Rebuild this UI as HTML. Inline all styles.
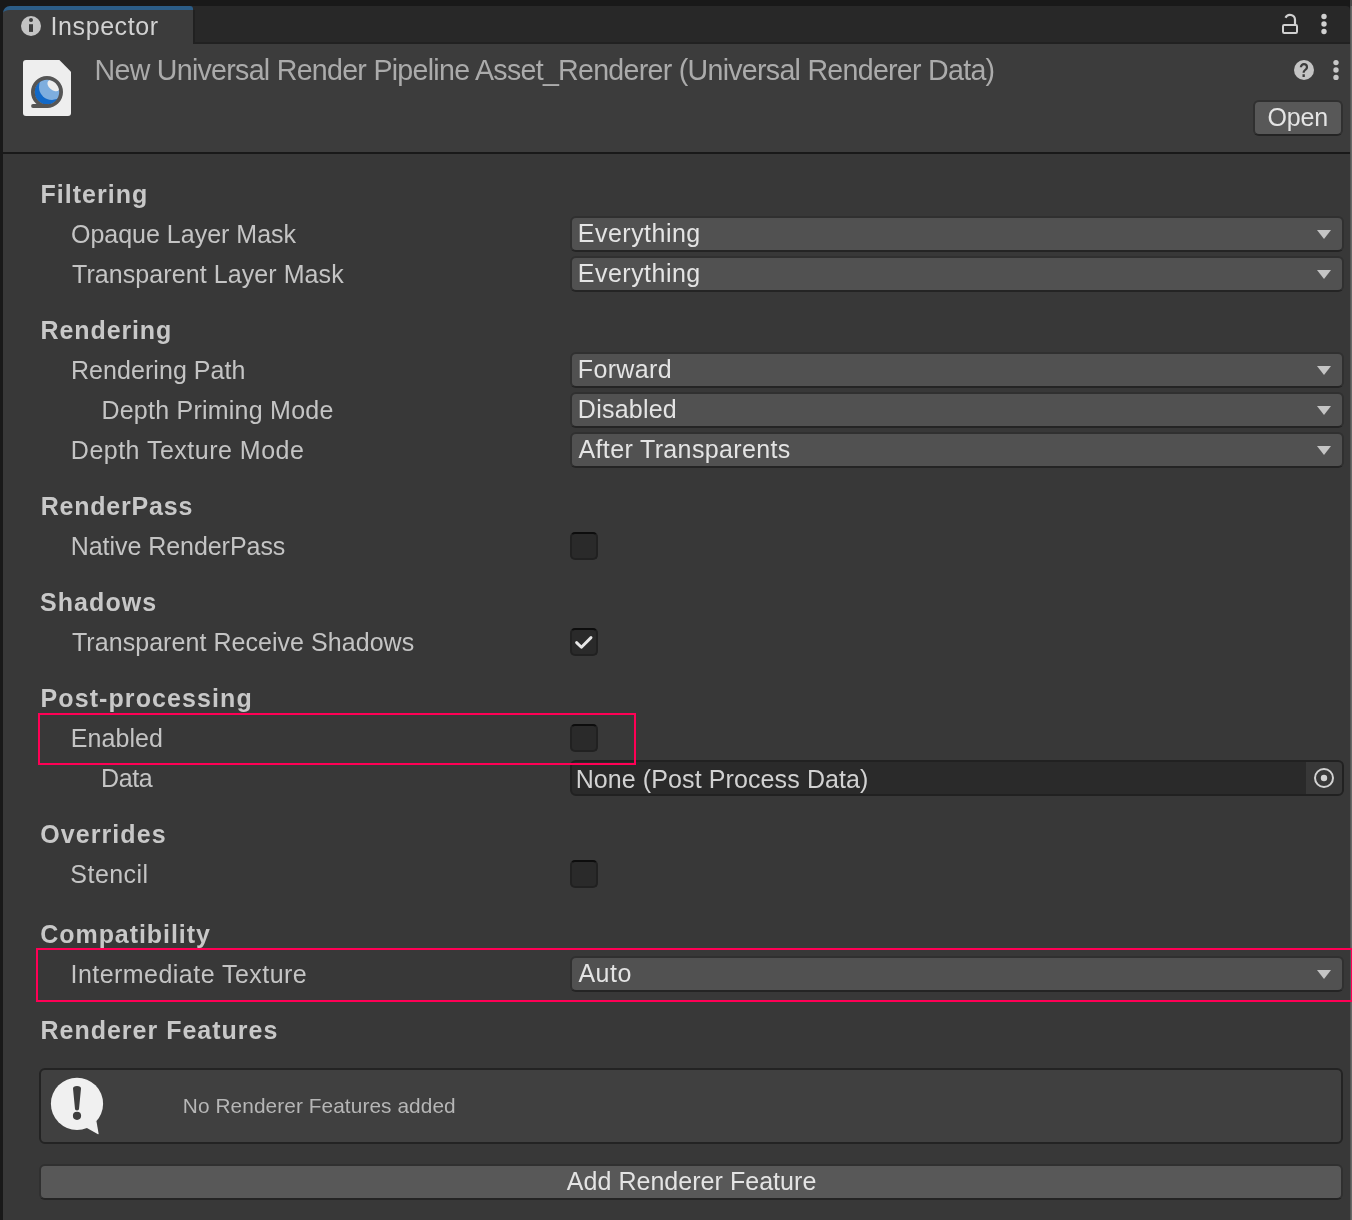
<!DOCTYPE html>
<html><head><meta charset="utf-8"><title>Inspector</title>
<style>
html,body{margin:0;padding:0;background:#383838;}
body{width:1352px;height:1220px;position:relative;overflow:hidden;font-family:"Liberation Sans",sans-serif;}
.abs{position:absolute}
.t{position:absolute;white-space:nowrap;line-height:40px;height:40px;transform-origin:0 50%;}
.dd{position:absolute;left:570px;width:774px;height:36px;box-sizing:border-box;background:#515151;border:2px solid #303030;border-bottom-color:#242424;border-radius:6px;}
.arr{position:absolute;right:11px;top:12px}
.cb{position:absolute;left:570px;width:28px;height:28px;box-sizing:border-box;background:#2a2a2a;border:2px solid #212121;border-top-color:#0d0d0d;border-radius:5px;}
.btn{position:absolute;box-sizing:border-box;background:#585858;border:2px solid #303030;border-bottom-color:#242424;border-radius:6px;}
.pink{position:absolute;box-sizing:border-box;border:2px solid #ff0055;}
</style></head><body>
<!-- window chrome -->
<div class="abs" style="left:0;top:0;width:1352px;height:12px;background:#191919"></div>
<div class="abs" style="left:3px;top:6px;width:1347px;height:38px;background:#282828;border-top-right-radius:4px"></div>
<div class="abs" style="left:193px;top:42px;width:1157px;height:2px;background:#212121"></div>
<div class="abs" style="left:193px;top:10px;width:2px;height:34px;background:#212121"></div>
<div class="abs" style="left:3px;top:44px;width:1347px;height:108px;background:#3c3c3c"></div>
<div class="abs" style="left:3px;top:6px;width:20px;height:12px;background:#191919"></div>
<div class="abs" style="left:3px;top:6px;width:190px;height:40px;box-sizing:border-box;background:#3c3c3c;border-top:4px solid #2c5d87;border-radius:7px 3px 0 0"></div>
<div class="abs" style="left:3px;top:152px;width:1347px;height:2px;background:#191919"></div>
<div class="abs" style="left:0;top:0;width:3px;height:1220px;background:#191919"></div>
<div class="abs" style="left:1350px;top:0;width:1px;height:1220px;background:#565656"></div>
<div class="abs" style="left:1351px;top:0;width:1px;height:1220px;background:#686868"></div>
<div class="abs" style="left:1350px;top:0;width:2px;height:6px;background:#4a4a4a"></div>

<!-- tab icon: info -->
<svg class="abs" style="left:21px;top:16px" width="20" height="20" viewBox="0 0 20 20"><circle cx="10" cy="10" r="10" fill="#c4c4c4"/><circle cx="10" cy="4.1" r="2" fill="#3c3c3c"/><rect x="8" y="8.2" width="4" height="7.7" fill="#3c3c3c"/></svg>
<!-- lock -->
<svg class="abs" style="left:1278px;top:10px" width="24" height="28" viewBox="0 0 24 28"><rect x="5" y="15" width="14" height="8" rx="1.2" fill="none" stroke="#d0d0d0" stroke-width="2" stroke-linejoin="round"/><path d="M7.5 7.7A5 5 0 0 1 17 9.8V15" fill="none" stroke="#d0d0d0" stroke-width="2.2"/></svg>
<!-- kebabs -->
<svg class="abs" style="left:1320px;top:12px" width="8" height="24" viewBox="0 0 8 24"><circle cx="4" cy="4.5" r="2.7" fill="#d0d0d0"/><circle cx="4" cy="12" r="2.7" fill="#d0d0d0"/><circle cx="4" cy="19.5" r="2.7" fill="#d0d0d0"/></svg>
<svg class="abs" style="left:1332px;top:58px" width="8" height="24" viewBox="0 0 8 24"><circle cx="4" cy="4.6" r="2.7" fill="#c8c8c8"/><circle cx="4" cy="12" r="2.7" fill="#c8c8c8"/><circle cx="4" cy="19.4" r="2.7" fill="#c8c8c8"/></svg>
<!-- help ? -->
<svg class="abs" style="left:1294px;top:60px" width="20" height="20" viewBox="0 0 20 20"><circle cx="10" cy="10" r="10" fill="#c4c4c4"/></svg>
<!-- asset icon -->
<svg class="abs" style="left:23px;top:60px" width="48" height="56" viewBox="0 0 48 56">
<path d="M3 0H36.4L48 11.8V53a3 3 0 0 1-3 3H3a3 3 0 0 1-3-3V3a3 3 0 0 1 3-3Z" fill="#eeeeee"/>
<clipPath id="ball"><circle cx="24" cy="32" r="12.6"/></clipPath>
<circle cx="24" cy="32" r="12.6" fill="#1269c8"/>
<g clip-path="url(#ball)"><circle cx="29" cy="27" r="13" fill="#7eaede"/><ellipse cx="30.6" cy="25.6" rx="7" ry="4.6" transform="rotate(40 30.6 25.6)" fill="#eeeeee"/></g>
<circle cx="24" cy="32" r="14.1" fill="none" stroke="#555555" stroke-width="3.8"/>
<path d="M10 46H24" stroke="#555555" stroke-width="3.8" stroke-linecap="round"/>
</svg>
<!-- open button -->
<div class="btn" style="left:1253px;top:100px;width:90px;height:36px"></div>

<!-- fields -->
<div class="dd" style="top:216px"><svg class="arr" width="14" height="9" viewBox="0 0 14 9"><path d="M0 0H14L7 9Z" fill="#c4c4c4"/></svg></div><div class="dd" style="top:256px"><svg class="arr" width="14" height="9" viewBox="0 0 14 9"><path d="M0 0H14L7 9Z" fill="#c4c4c4"/></svg></div><div class="dd" style="top:352px"><svg class="arr" width="14" height="9" viewBox="0 0 14 9"><path d="M0 0H14L7 9Z" fill="#c4c4c4"/></svg></div><div class="dd" style="top:392px"><svg class="arr" width="14" height="9" viewBox="0 0 14 9"><path d="M0 0H14L7 9Z" fill="#c4c4c4"/></svg></div><div class="dd" style="top:432px"><svg class="arr" width="14" height="9" viewBox="0 0 14 9"><path d="M0 0H14L7 9Z" fill="#c4c4c4"/></svg></div><div class="dd" style="top:956px"><svg class="arr" width="14" height="9" viewBox="0 0 14 9"><path d="M0 0H14L7 9Z" fill="#c4c4c4"/></svg></div>
<div class="cb" style="top:532px"></div><div class="cb" style="top:628px"><svg width="28" height="28" viewBox="0 0 28 28" style="position:absolute;left:-2px;top:-2px"><path d="M6.6 14.6L11.4 19.2L21 9.6" fill="none" stroke="#e6e6e6" stroke-width="2.9" stroke-linecap="round" stroke-linejoin="round"/></svg></div><div class="cb" style="top:724px"></div><div class="cb" style="top:860px"></div>
<div class="abs" style="left:570px;top:760px;width:774px;height:36px;box-sizing:border-box;background:#2a2a2a;border:2px solid #212121;border-radius:6px;overflow:hidden"><div style="position:absolute;right:0;top:0;width:36px;height:32px;background:#383838"></div>
<svg style="position:absolute;right:6px;top:4px" width="24" height="24" viewBox="0 0 24 24"><circle cx="12" cy="12" r="9" fill="none" stroke="#d2d2d2" stroke-width="2"/><circle cx="12" cy="12" r="3.2" fill="#d2d2d2"/></svg></div>

<!-- help box -->
<div class="abs" style="left:39px;top:1068px;width:1304px;height:76px;box-sizing:border-box;background:#404040;border:2px solid #232323;border-radius:6px"></div>
<svg class="abs" style="left:49px;top:1076px" width="58" height="60" viewBox="0 0 58 60"><circle cx="28" cy="27.8" r="26.1" fill="#f0f0f0"/><path d="M37 51.5L47.4 45L49.6 57.4Q49.8 58.6 48.6 58Z" fill="#f0f0f0"/><path d="M24 12.5a4 2.6 0 0 1 8 0L30 33a2 1.4 0 0 1-4 0Z" fill="#3e3e3e"/><circle cx="28" cy="39.8" r="4.1" fill="#3e3e3e"/></svg>
<!-- add button -->
<div class="btn" style="left:39px;top:1164px;width:1304px;height:36px"></div>

<!-- texts -->
<div id="texts" style="position:absolute;left:0;top:0;width:1352px;height:1220px;will-change:transform">
<span class="t" id="tab" style="left:50.62px;top:6.34px;font-size:25px;font-weight:400;color:#d2d2d2;letter-spacing:0.568px">Inspector</span>
<span class="t" id="title" style="left:94.55px;top:49.99px;font-size:28.6px;font-weight:400;color:#ababab;letter-spacing:-0.722px">New Universal Render Pipeline Asset_Renderer (Universal Renderer Data)</span>
<span class="t" id="open" style="left:1267.39px;top:97.34px;font-size:25px;font-weight:400;color:#e4e4e4;letter-spacing:-0.094px">Open</span>
<span class="t" id="h1" style="left:40.45px;top:174.34px;font-size:25px;font-weight:700;color:#c8c8c8;letter-spacing:1.034px">Filtering</span>
<span class="t" id="l1" style="left:70.98px;top:214.34px;font-size:25px;font-weight:400;color:#c4c4c4;letter-spacing:-0.001px">Opaque Layer Mask</span>
<span class="t" id="l2" style="left:71.97px;top:254.34px;font-size:25px;font-weight:400;color:#c4c4c4;letter-spacing:0.081px">Transparent Layer Mask</span>
<span class="t" id="h2" style="left:40.62px;top:310.34px;font-size:25px;font-weight:700;color:#c8c8c8;letter-spacing:0.881px">Rendering</span>
<span class="t" id="l3" style="left:70.97px;top:350.34px;font-size:25px;font-weight:400;color:#c4c4c4;letter-spacing:0.058px">Rendering Path</span>
<span class="t" id="l4" style="left:101.40px;top:390.34px;font-size:25px;font-weight:400;color:#c4c4c4;letter-spacing:0.239px">Depth Priming Mode</span>
<span class="t" id="l5" style="left:70.85px;top:430.34px;font-size:25px;font-weight:400;color:#c4c4c4;letter-spacing:0.489px">Depth Texture Mode</span>
<span class="t" id="h3" style="left:40.67px;top:486.34px;font-size:25px;font-weight:700;color:#c8c8c8;letter-spacing:0.795px">RenderPass</span>
<span class="t" id="l6" style="left:70.66px;top:526.34px;font-size:25px;font-weight:400;color:#c4c4c4;letter-spacing:-0.044px">Native RenderPass</span>
<span class="t" id="h4" style="left:39.98px;top:582.34px;font-size:25px;font-weight:700;color:#c8c8c8;letter-spacing:1.075px">Shadows</span>
<span class="t" id="l7" style="left:71.96px;top:622.34px;font-size:25px;font-weight:400;color:#c4c4c4;letter-spacing:0.052px">Transparent Receive Shadows</span>
<span class="t" id="h5" style="left:40.50px;top:678.34px;font-size:25px;font-weight:700;color:#c8c8c8;letter-spacing:1.099px">Post-processing</span>
<span class="t" id="l8" style="left:70.87px;top:718.34px;font-size:25px;font-weight:400;color:#c4c4c4;letter-spacing:0.041px">Enabled</span>
<span class="t" id="l9" style="left:101.10px;top:758.34px;font-size:25px;font-weight:400;color:#c4c4c4;letter-spacing:-0.388px">Data</span>
<span class="t" id="h6" style="left:40.25px;top:814.34px;font-size:25px;font-weight:700;color:#c8c8c8;letter-spacing:1.076px">Overrides</span>
<span class="t" id="l10" style="left:70.37px;top:854.34px;font-size:25px;font-weight:400;color:#c4c4c4;letter-spacing:0.449px">Stencil</span>
<span class="t" id="h7" style="left:40.27px;top:914.34px;font-size:25px;font-weight:700;color:#c8c8c8;letter-spacing:0.942px">Compatibility</span>
<span class="t" id="l11" style="left:70.49px;top:954.34px;font-size:25px;font-weight:400;color:#c4c4c4;letter-spacing:0.463px">Intermediate Texture</span>
<span class="t" id="h8" style="left:40.50px;top:1010.34px;font-size:25px;font-weight:700;color:#c8c8c8;letter-spacing:0.994px">Renderer Features</span>
<span class="t" id="v1" style="left:577.85px;top:213.34px;font-size:25px;font-weight:400;color:#e4e4e4;letter-spacing:0.475px">Everything</span>
<span class="t" id="v2" style="left:577.85px;top:253.34px;font-size:25px;font-weight:400;color:#e4e4e4;letter-spacing:0.475px">Everything</span>
<span class="t" id="v3" style="left:577.86px;top:349.34px;font-size:25px;font-weight:400;color:#e4e4e4;letter-spacing:0.331px">Forward</span>
<span class="t" id="v4" style="left:577.86px;top:389.34px;font-size:25px;font-weight:400;color:#e4e4e4;letter-spacing:0.228px">Disabled</span>
<span class="t" id="v5" style="left:578.47px;top:429.34px;font-size:25px;font-weight:400;color:#e4e4e4;letter-spacing:0.365px">After Transparents</span>
<span class="t" id="v6" style="left:575.64px;top:759.34px;font-size:25px;font-weight:400;color:#d2d2d2;letter-spacing:0.105px">None (Post Process Data)</span>
<span class="t" id="v7" style="left:578.38px;top:953.34px;font-size:25px;font-weight:400;color:#e4e4e4;letter-spacing:0.531px">Auto</span>
<span class="t" id="help" style="left:182.83px;top:1086.29px;font-size:20.8px;font-weight:400;color:#b6b6b6;letter-spacing:0.091px">No Renderer Features added</span>
<span class="t" id="add" style="left:566.82px;top:1160.84px;font-size:25px;font-weight:400;color:#e4e4e4;letter-spacing:0.038px">Add Renderer Feature</span>
<span id="q" style="position:absolute;left:1294px;top:59px;width:20px;height:22px;line-height:22px;text-align:center;font-size:19.5px;font-weight:700;color:#3c3c3c;transform:scaleX(0.84)">?</span>
</div>

<!-- highlight rects -->
<div class="pink" style="left:38px;top:713px;width:598px;height:52px"></div>
<div class="pink" style="left:36px;top:948px;width:1317px;height:54px"></div>
</body></html>
